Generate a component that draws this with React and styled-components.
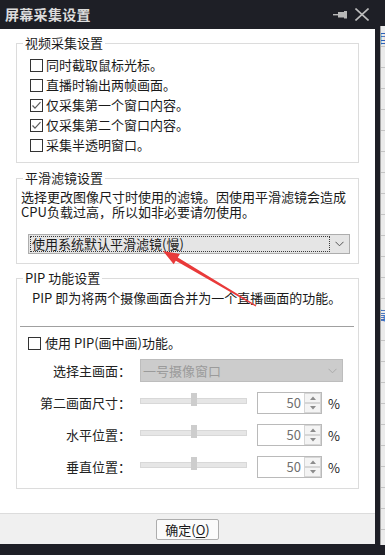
import React from 'react';
import styled, { createGlobalStyle } from 'styled-components';

const FONT = `"Noto Sans CJK SC", "Microsoft YaHei", sans-serif`;

const GlobalStyle = createGlobalStyle`
  html, body { margin: 0; padding: 0; background: #1e1f26; }
  body { font-family: ${FONT}; }
  * { box-sizing: border-box; }
`;

const Page = styled.div`
  position: relative;
  width: 385px;
  height: 555px;
  display: flex;
  align-items: flex-start;
  background: #1e1f26;
  overflow: hidden;
  font-family: ${FONT};
  font-size: 13px;
  color: #1a1a1a;
`;

const Window = styled.div`
  width: 380px;
  display: flex;
  flex-direction: column;
`;

const TitleBar = styled.div`
  height: 29px;
  display: flex;
  align-items: center;
  padding-left: 5px;
`;

const Title = styled.div`
  flex: 1;
  color: #dcdcdc;
  font-weight: 700;
  font-size: 14px;
  letter-spacing: 0.3px;
  line-height: 29px;
`;

const TitleButtons = styled.div`
  display: flex;
  align-items: center;
  gap: 8px;
  margin-right: 11px;
`;

const Dialog = styled.div`
  width: 375px;
  height: 515px;
  display: flex;
  flex-direction: column;
`;

const Body = styled.div`
  height: 484px;
  background: #ffffff;
  padding-top: 6px;
`;

const Footer = styled.div`
  height: 31px;
  background: #f0f0f0;
  border-top: 1px solid #dcdcdc;
  display: flex;
  justify-content: center;
  padding-top: 5px;
`;

const OkButton = styled.button`
  width: 63px;
  height: 21px;
  padding: 0;
  border: 1px solid #adadad;
  border-radius: 2px;
  background: #fbfbfb;
  font-family: ${FONT};
  font-size: 13px;
  line-height: 19px;
  color: #1a1a1a;
  u { text-decoration: underline; text-underline-offset: 2px; }
`;

const Group = styled.fieldset`
  margin: ${(p) => p.$top || 0}px 0 0 16px;
  width: 343px;
  border: 1px solid #dcdcdc;
  padding: 0;
  min-inline-size: 0;
`;

const Legend = styled.legend`
  margin-left: 6px;
  padding: 0 2px;
  font-size: 13px;
  line-height: 16px;
  color: #1a1a1a;
`;

const CheckList = styled.div`
  padding: 4px 0 7px 13px;
`;

const CheckRow = styled.label`
  display: flex;
  align-items: center;
  height: 20px;
  gap: ${(p) => p.$gap || 3}px;
  line-height: 20px;
  white-space: nowrap;
`;

const Box = styled.span`
  width: 13px;
  height: 13px;
  border: 1px solid #333333;
  background: #ffffff;
  display: inline-flex;
  align-items: center;
  justify-content: center;
  flex: none;
`;

const Desc = styled.div`
  padding: ${(p) => p.$pad};
`;

const DescLine = styled.div`
  line-height: ${(p) => p.$lh}px;
  white-space: nowrap;
`;

const Dropdown = styled.div`
  margin: 15px 8px 9px 11px;
  height: 20px;
  background: #e5e5e5;
  border: 1px solid #adadad;
  display: flex;
  align-items: center;
  padding: 1px;
`;

const FocusText = styled.div`
  width: 300px;
  height: 16px;
  border: 1px dotted #3a3a3a;
  line-height: 14px;
  padding-left: 1px;
  white-space: nowrap;
`;

const ChevronBox = styled.div`
  flex: 1;
  display: flex;
  justify-content: center;
  align-items: center;
`;

const Separator = styled.div`
  height: 1px;
  background: #a0a0a0;
  margin: 20px 4px 0 3px;
`;

const PipCheck = styled.div`
  margin-top: 6px;
  padding-left: 11px;
`;

const Controls = styled.div`
  margin-top: 6px;
  padding-bottom: 10px;
  display: grid;
  grid-template-columns: 114px auto;
  column-gap: 9px;
  row-gap: 10px;
  align-items: center;
`;

const Label = styled.div`
  text-align: right;
  white-space: nowrap;
  color: #222222;
  line-height: 20px;
`;

const DisabledSelect = styled.div`
  width: 203px;
  height: 23px;
  background: #cccccc;
  border: 1px solid #bdbdbd;
  display: flex;
  align-items: center;
  padding: 0 5px 0 2px;
  color: #9b9b9b;
  line-height: 21px;
  justify-content: space-between;
`;

const ControlRow = styled.div`
  display: flex;
  align-items: center;
  height: 22px;
`;

const Slider = styled.div`
  position: relative;
  width: 107px;
  height: 13px;
  align-self: flex-start;
  margin: 1px 10px 0 0;
  &::before {
    content: '';
    position: absolute;
    left: 0;
    right: 0;
    top: 5px;
    height: 4px;
    background: #e6e6e6;
    border: 1px solid #d8d8d8;
  }
`;

const Thumb = styled.div`
  position: absolute;
  top: 0;
  width: 6px;
  height: 13px;
  margin-left: -3px;
  background: #cdcdcd;
`;

const Spin = styled.div`
  width: 65px;
  height: 22px;
  border: 1px solid #bababa;
  background: #ffffff;
  display: flex;
`;

const SpinValue = styled.div`
  flex: 1;
  text-align: right;
  padding-right: 3px;
  color: #6f6f6f;
  line-height: 20px;
`;

const SpinButtons = styled.div`
  width: 17px;
  display: flex;
  flex-direction: column;
`;

const SpinButton = styled.div`
  flex: 1;
  border: 1px solid #d6d6d6;
  background: #f4f4f4;
  display: flex;
  align-items: center;
  justify-content: center;
`;

const Percent = styled.div`
  margin-left: 6px;
  color: #222222;
`;

const Strip = styled.div`
  width: 5px;
  height: 519px;
  margin-top: 26px;
  background:
    repeating-linear-gradient(to bottom, transparent 0, transparent 20px, #c4c4c4 20px, #c4c4c4 21px),
    #ebebeb;
  border-left: 1px solid #a5a5a5;
  overflow: hidden;
  display: flex;
  flex-direction: column;
  justify-content: space-between;
  padding: 4px 0 222px;
`;

const StripGlyph = styled.span`
  color: #2b5fb8;
  font-size: 13px;
  line-height: 16px;
  margin-left: -7px;
  white-space: nowrap;
`;

const ArrowLayer = styled.svg`
  position: absolute;
  left: 0;
  top: 0;
  pointer-events: none;
`;

const Check = ({ checked, gap, children }) => (
  <CheckRow $gap={gap}>
    <Box>
      {checked && (
        <svg width="11" height="11" viewBox="0 0 11 11">
          <polyline points="1.5,5.5 4,8.2 9.5,2.2" fill="none" stroke="#5c5c5c" strokeWidth="1.2" />
        </svg>
      )}
    </Box>
    {children}
  </CheckRow>
);

const Chevron = ({ color }) => (
  <svg width="9" height="6" viewBox="0 0 9 6">
    <polyline points="0.5,0.8 4.5,4.8 8.5,0.8" fill="none" stroke={color} strokeWidth="1" />
  </svg>
);

const Tri = ({ up }) => (
  <svg width="6" height="4" viewBox="0 0 6 4">
    <polygon points={up ? '0,4 6,4 3,0.5' : '0,0 6,0 3,3.5'} fill="#8c8c8c" />
  </svg>
);

const SliderRow = ({ label, value }) => (
  <>
    <Label>{label}</Label>
    <ControlRow>
      <Slider>
        <Thumb style={{ left: `${value}%` }} />
      </Slider>
      <Spin>
        <SpinValue>{value}</SpinValue>
        <SpinButtons>
          <SpinButton><Tri up /></SpinButton>
          <SpinButton><Tri /></SpinButton>
        </SpinButtons>
      </Spin>
      <Percent>%</Percent>
    </ControlRow>
  </>
);

export default function App() {
  return (
    <>
      <GlobalStyle />
      <Page>
        <Window>
          <TitleBar>
            <Title>屏幕采集设置</Title>
            <TitleButtons>
              <svg width="14" height="8" viewBox="0 0 14 8">
                <rect x="0" y="3" width="6" height="1.4" fill="#b8b8b8" />
                <rect x="5" y="1" width="6" height="5.5" fill="#b8b8b8" />
                <rect x="11" y="0" width="3" height="7.5" fill="#b8b8b8" />
              </svg>
              <svg width="14" height="13" viewBox="0 0 14 13">
                <line x1="0.5" y1="0.5" x2="13.5" y2="12.5" stroke="#bdbdbd" strokeWidth="1.6" />
                <line x1="13.5" y1="0.5" x2="0.5" y2="12.5" stroke="#bdbdbd" strokeWidth="1.6" />
              </svg>
            </TitleButtons>
          </TitleBar>
          <Dialog>
            <Body>
              <Group>
                <Legend>视频采集设置</Legend>
                <CheckList>
                  <Check>同时截取鼠标光标。</Check>
                  <Check>直播时输出两帧画面。</Check>
                  <Check checked>仅采集第一个窗口内容。</Check>
                  <Check checked>仅采集第二个窗口内容。</Check>
                  <Check>采集半透明窗口。</Check>
                </CheckList>
              </Group>

              <Group $top={7}>
                <Legend>平滑滤镜设置</Legend>
                <Desc $pad="3px 0 0 4px">
                  <DescLine $lh={15}>选择更改图像尺寸时使用的滤镜。因使用平滑滤镜会造成</DescLine>
                  <DescLine $lh={15}>CPU负载过高，所以如非必要请勿使用。</DescLine>
                </Desc>
                <Dropdown>
                  <FocusText>使用系统默认平滑滤镜(慢)</FocusText>
                  <ChevronBox><Chevron color="#555555" /></ChevronBox>
                </Dropdown>
              </Group>

              <Group $top={6}>
                <Legend>PIP 功能设置</Legend>
                <Desc $pad="4px 0 0 15px">
                  <DescLine $lh={16}>PIP 即为将两个摄像画面合并为一个直播画面的功能。</DescLine>
                </Desc>
                <Separator />
                <PipCheck>
                  <Check gap={4}>使用 PIP(画中画)功能。</Check>
                </PipCheck>
                <Controls>
                  <Label>选择主画面：</Label>
                  <DisabledSelect>
                    <span>一号摄像窗口</span>
                    <Chevron color="#aaaaaa" />
                  </DisabledSelect>
                  <SliderRow label="第二画面尺寸：" value={50} />
                  <SliderRow label="水平位置：" value={50} />
                  <SliderRow label="垂直位置：" value={50} />
                </Controls>
              </Group>
            </Body>
            <Footer>
              <OkButton>确定(<u>O</u>)</OkButton>
            </Footer>
          </Dialog>
        </Window>
        <Strip>
          <StripGlyph>相</StripGlyph>
          <StripGlyph>盲</StripGlyph>
        </Strip>
        <ArrowLayer width="385" height="555" viewBox="0 0 385 555">
          <polygon
            points="256.3,305.5 177.8,257.4 179.9,253.9 163,251 173.7,264.3 175.8,260.8 255.7,306.5"
            fill="#e93a3a"
          />
        </ArrowLayer>
      </Page>
    </>
  );
}
